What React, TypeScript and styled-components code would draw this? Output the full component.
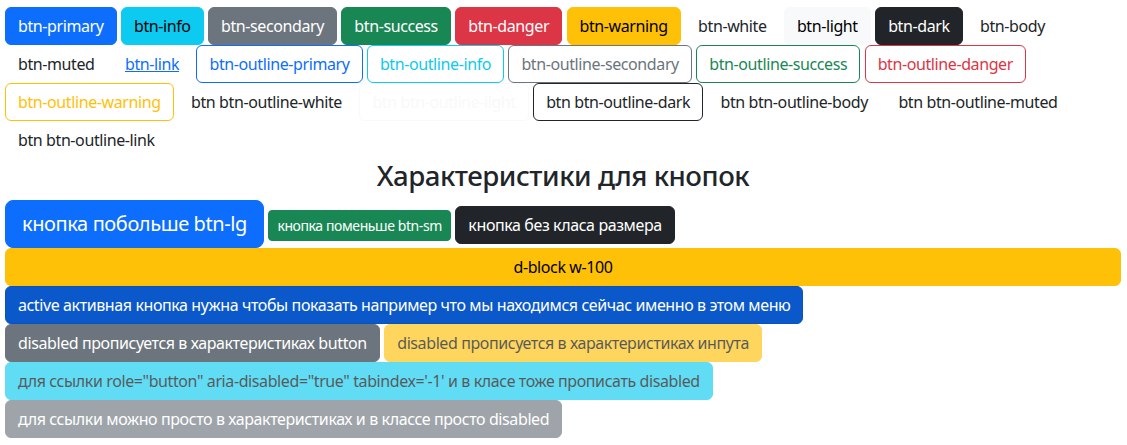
import styled, { createGlobalStyle, css } from 'styled-components';

const GlobalStyle = createGlobalStyle`
  body {
    margin: 0;
    background: #fff;
    color: #212529;
    font-family: "Noto Sans", "Liberation Sans", sans-serif;
    font-size: 16px;
    line-height: 1.5;
  }
`;

type Variant =
  | 'primary' | 'info' | 'secondary' | 'success' | 'danger' | 'warning'
  | 'light' | 'dark' | 'plain' | 'link'
  | 'outline-primary' | 'outline-info' | 'outline-secondary' | 'outline-success'
  | 'outline-danger' | 'outline-warning' | 'outline-light' | 'outline-dark';

const palette: Record<Variant, { bg: string; color: string; border: string }> = {
  primary: { bg: '#0d6efd', color: '#fff', border: '#0d6efd' },
  info: { bg: '#0dcaf0', color: '#000', border: '#0dcaf0' },
  secondary: { bg: '#6c757d', color: '#fff', border: '#6c757d' },
  success: { bg: '#198754', color: '#fff', border: '#198754' },
  danger: { bg: '#dc3545', color: '#fff', border: '#dc3545' },
  warning: { bg: '#ffc107', color: '#000', border: '#ffc107' },
  light: { bg: '#f8f9fa', color: '#000', border: '#f8f9fa' },
  dark: { bg: '#212529', color: '#fff', border: '#212529' },
  plain: { bg: 'transparent', color: '#212529', border: 'transparent' },
  link: { bg: 'transparent', color: '#0d6efd', border: 'transparent' },
  'outline-primary': { bg: 'transparent', color: '#0d6efd', border: '#0d6efd' },
  'outline-info': { bg: 'transparent', color: '#0dcaf0', border: '#0dcaf0' },
  'outline-secondary': { bg: 'transparent', color: '#6c757d', border: '#6c757d' },
  'outline-success': { bg: 'transparent', color: '#198754', border: '#198754' },
  'outline-danger': { bg: 'transparent', color: '#dc3545', border: '#dc3545' },
  'outline-warning': { bg: 'transparent', color: '#ffc107', border: '#ffc107' },
  'outline-light': { bg: 'transparent', color: '#f8f9fa', border: '#f8f9fa' },
  'outline-dark': { bg: 'transparent', color: '#212529', border: '#212529' },
};

const sizes = {
  sm: css`
    padding: 4px 8px;
    font-size: 14px;
    border-radius: 4px;
  `,
  md: css`
    padding: 6px 12px;
    font-size: 16px;
    border-radius: 6px;
  `,
  lg: css`
    padding: 8px 16px;
    font-size: 20px;
    border-radius: 8px;
  `,
};

const Page = styled.main`
  padding: 7px 6px 0 5px;
`;

const ButtonRow = styled.div`
  display: flex;
  flex-wrap: wrap;
  align-items: baseline;
  column-gap: 4.4px;
`;

const Btn = styled.button<{
  $variant: Variant;
  $size?: keyof typeof sizes;
  $block?: boolean;
  $active?: boolean;
  $faded?: boolean;
}>`
  display: inline-block;
  box-sizing: border-box;
  margin: 0;
  border: 1px solid ${({ $variant }) => palette[$variant].border};
  background: ${({ $variant }) => palette[$variant].bg};
  color: ${({ $variant }) => palette[$variant].color};
  font-family: inherit;
  font-weight: 400;
  line-height: 1.5;
  letter-spacing: -0.4px;
  text-align: center;
  white-space: nowrap;
  text-decoration: ${({ $variant }) => ($variant === 'link' ? 'underline' : 'none')};
  cursor: pointer;
  ${({ $size = 'md' }) => sizes[$size]}
  ${({ $block }) => $block && css`width: 100%;`}
  ${({ $active }) =>
    $active &&
    css`
      background: #0a58ca;
      border-color: #0a53be;
    `}
  ${({ $faded }) => $faded && css`opacity: 0.65;`}
`;

const Title = styled.h3`
  margin: 0 0 8px;
  font-size: 27.6px;
  font-weight: 500;
  line-height: 1.2;
  text-align: center;
  color: #212529;
  letter-spacing: -0.45px;
`;

const colourButtons: [Variant, string][] = [
  ['primary', 'btn-primary'],
  ['info', 'btn-info'],
  ['secondary', 'btn-secondary'],
  ['success', 'btn-success'],
  ['danger', 'btn-danger'],
  ['warning', 'btn-warning'],
  ['plain', 'btn-white'],
  ['light', 'btn-light'],
  ['dark', 'btn-dark'],
  ['plain', 'btn-body'],
  ['plain', 'btn-muted'],
  ['link', 'btn-link'],
  ['outline-primary', 'btn-outline-primary'],
  ['outline-info', 'btn-outline-info'],
  ['outline-secondary', 'btn-outline-secondary'],
  ['outline-success', 'btn-outline-success'],
  ['outline-danger', 'btn-outline-danger'],
  ['outline-warning', 'btn-outline-warning'],
  ['plain', 'btn btn-outline-white'],
  ['outline-light', 'btn btn-outline-light'],
  ['outline-dark', 'btn btn-outline-dark'],
  ['plain', 'btn btn-outline-body'],
  ['plain', 'btn btn-outline-muted'],
  ['plain', 'btn btn-outline-link'],
];

export default function App() {
  return (
    <>
      <GlobalStyle />
      <Page>
        <ButtonRow>
          {colourButtons.map(([variant, label], i) => (
            <Btn key={i} $variant={variant}>
              {label}
            </Btn>
          ))}
        </ButtonRow>

        <Title>Характеристики для кнопок</Title>

        <ButtonRow>
          <Btn $variant="primary" $size="lg">кнопка побольше btn-lg</Btn>
          <Btn $variant="success" $size="sm">кнопка поменьше btn-sm</Btn>
          <Btn $variant="dark">кнопка без класа размера</Btn>
        </ButtonRow>

        <Btn $variant="warning" $block>d-block w-100</Btn>

        <ButtonRow>
          <Btn $variant="primary" $active>
            active активная кнопка нужна чтобы показать например что мы находимся сейчас именно в этом меню
          </Btn>
          <Btn $variant="secondary">disabled прописуется в характеристиках button</Btn>
          <Btn $variant="warning" $faded disabled>
            disabled прописуется в характеристиках инпута
          </Btn>
          <Btn $variant="info" $faded>
            для ссылки role="button" aria-disabled="true" tabindex='-1' и в класе тоже прописать disabled
          </Btn>
          <Btn $variant="secondary" $faded>
            для ссылки можно просто в характеристиках и в классе просто disabled
          </Btn>
        </ButtonRow>
      </Page>
    </>
  );
}
